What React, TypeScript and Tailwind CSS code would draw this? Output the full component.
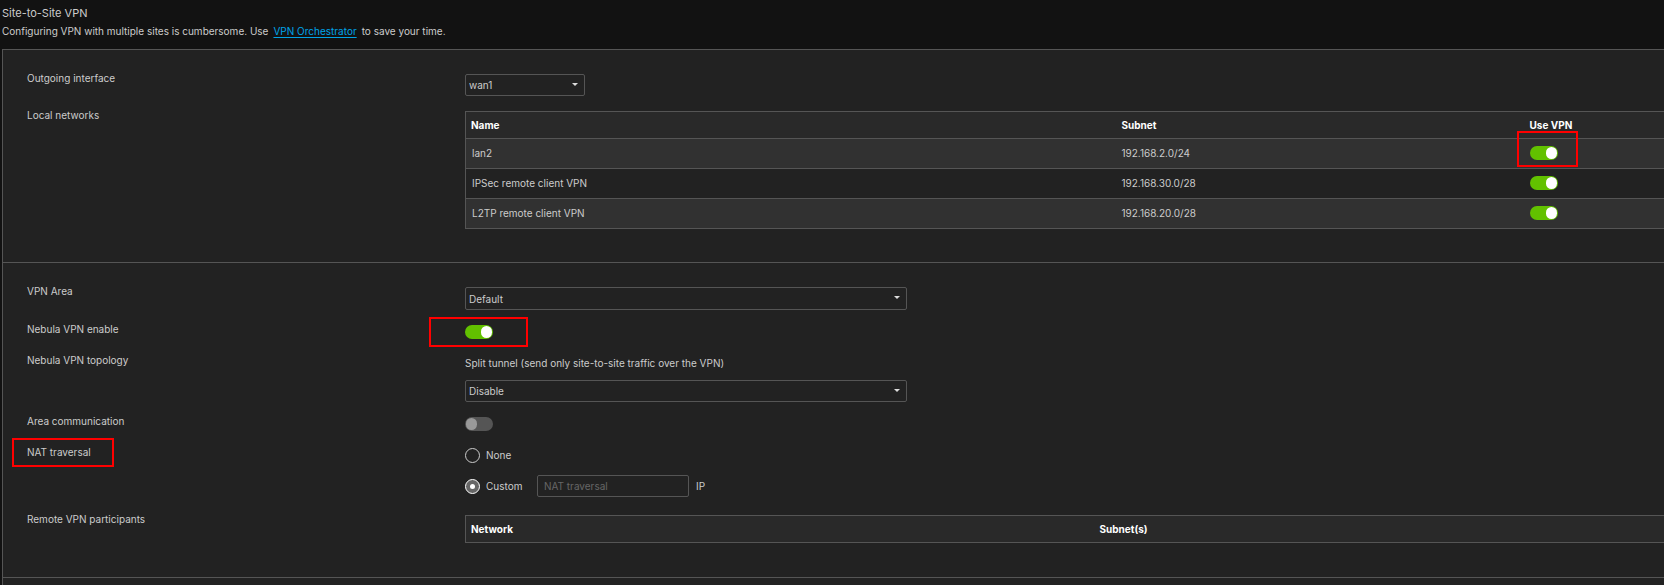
import { useState, type ReactNode } from "react";

interface Network {
  name: string;
  subnet: string;
  useVpn: boolean;
  highlighted?: boolean;
}

const initialNetworks: Network[] = [
  { name: "lan2", subnet: "192.168.2.0/24", useVpn: true, highlighted: true },
  { name: "IPSec remote client VPN", subnet: "192.168.30.0/28", useVpn: true },
  { name: "L2TP remote client VPN", subnet: "192.168.20.0/28", useVpn: true },
];

function Toggle({ id, label, checked, onChange }: {
  id?: string;
  label?: string;
  checked: boolean;
  onChange: (value: boolean) => void;
}) {
  return (
    <input
      type="checkbox"
      role="switch"
      id={id}
      aria-label={label}
      checked={checked}
      onChange={(e) => onChange(e.target.checked)}
      className="block w-7 h-3.5 shrink-0 appearance-none rounded-full bg-[#555] p-px cursor-pointer before:block before:h-3 before:w-[11px] before:rounded-full before:bg-[#999] checked:bg-[#62c100] checked:before:ml-auto checked:before:bg-white"
    />
  );
}

function Select({ id, options, className }: { id: string; options: string[]; className: string }) {
  return (
    <div className={`relative ${className}`}>
      <select
        id={id}
        className="block w-full h-full appearance-none rounded-xs border border-[#555] bg-[#222] pl-[3px] pr-5 text-[#ccc] outline-none"
      >
        {options.map((o) => (
          <option key={o}>{o}</option>
        ))}
      </select>
      <svg viewBox="0 0 6 3" className="pointer-events-none absolute right-[7px] top-[9px] w-1.5 h-[3px] fill-[#ddd]">
        <path d="M0 0h6L3 3z" />
      </svg>
    </div>
  );
}

function Radio({ id, label, checked, onChange }: {
  id: string;
  label: string;
  checked: boolean;
  onChange: () => void;
}) {
  return (
    <div className="flex items-center gap-1.5">
      <input
        type="radio"
        name="nat"
        id={id}
        checked={checked}
        onChange={onChange}
        className="grid place-items-center w-[15px] h-[15px] appearance-none rounded-full border border-[#ccc] checked:border-white checked:bg-[#666] checked:before:block checked:before:w-[5px] checked:before:h-[5px] checked:before:rounded-full checked:before:bg-white"
      />
      <label htmlFor={id} className="pb-px leading-[14px]">{label}</label>
    </div>
  );
}

// Red callout frame drawn over the form
function Callout({ className }: { className: string }) {
  return <span className={`pointer-events-none absolute z-10 border-2 border-[#f00] ${className}`} />;
}

function Row({ label, htmlFor, callout, children }: {
  label: string;
  htmlFor?: string;
  callout?: ReactNode;
  children: ReactNode;
}) {
  return (
    <div className="flex items-start">
      <div className="relative w-[438px] shrink-0">
        {htmlFor ? <label htmlFor={htmlFor} className="block">{label}</label> : <div>{label}</div>}
        {callout}
      </div>
      <div className="flex-1 min-w-0 pt-1">{children}</div>
    </div>
  );
}

export default function App() {
  const [networks, setNetworks] = useState(initialNetworks);
  const [vpnEnabled, setVpnEnabled] = useState(true);
  const [areaComm, setAreaComm] = useState(false);
  const [nat, setNat] = useState("custom");

  const setUseVpn = (name: string, useVpn: boolean) =>
    setNetworks(networks.map((n) => (n.name === name ? { ...n, useVpn } : n)));

  return (
    <div className="min-h-screen overflow-hidden flex flex-col bg-[#121212] pl-0.5 font-['Inter',sans-serif] text-[10px] leading-4 text-[#ccc]">
      {/* Header */}
      <header className="pt-[5px] pb-2.5">
        <h1 className="text-[11px] leading-4">Site-to-Site VPN</h1>
        <p className="pt-0.5">
          Configuring VPN with multiple sites is cumbersome. Use
          <a href="#orchestrator" className="mx-[5px] text-[#00a3e8] underline underline-offset-2">VPN Orchestrator</a>
          to save your time.
        </p>
      </header>

      <main className="flex-1 border-t border-l border-[#555] bg-[#222]">
        {/* Interfaces */}
        <section className="flex flex-col gap-[11px] border-b border-[#555] pl-6 pt-5 pb-[33px]">
          <Row label="Outgoing interface" htmlFor="outgoing">
            <Select id="outgoing" options={["wan1", "wan2"]} className="w-[120px] h-[22px]" />
          </Row>
          <Row label="Local networks">
            <table className="w-full border-collapse border border-r-0 border-[#555] text-left">
              <thead className="bg-[#292929] font-bold text-white">
                <tr className="h-[27px]">
                  <th className="w-[651px] pl-[5px]">Name</th>
                  <th className="w-[408px] pl-[5px]">Subnet</th>
                  <th className="pl-[5px]">Use VPN</th>
                </tr>
              </thead>
              <tbody>
                {networks.map((n) => (
                  <tr key={n.name} className="h-[30px] border-t border-[#555] odd:bg-[#313131]">
                    <td className="pl-1.5 pb-0.5">{n.name}</td>
                    <td className="pl-[5px] pb-0.5">{n.subnet}</td>
                    <td className="pl-[5px] pb-0.5">
                      <div className="relative w-7">
                        <Toggle
                          label={`Use VPN for ${n.name}`}
                          checked={n.useVpn}
                          onChange={(v) => setUseVpn(n.name, v)}
                        />
                        {n.highlighted && <Callout className="-left-[13px] -top-[15px] w-[61px] h-9" />}
                      </div>
                    </td>
                  </tr>
                ))}
              </tbody>
            </table>
          </Row>
        </section>

        {/* VPN settings */}
        <section className="flex flex-col gap-[11px] border-b border-[#555] pl-6 pt-5 pb-[34px]">
          <Row label="VPN Area" htmlFor="area">
            <Select id="area" options={["Default"]} className="w-[442px] max-w-full h-[23px]" />
          </Row>
          <Row label="Nebula VPN enable" htmlFor="enable">
            <div className="relative h-4 w-7">
              <Toggle id="enable" checked={vpnEnabled} onChange={setVpnEnabled} />
              <Callout className="-left-9 -top-2 w-[99px] h-[30px]" />
            </div>
          </Row>
          <Row label="Nebula VPN topology" htmlFor="topology">
            <p className="leading-[14px]">Split tunnel (send only site-to-site traffic over the VPN)</p>
            <Select
              id="topology"
              options={["Disable", "Site-to-Site", "Hub-and-Spoke"]}
              className="mt-2.5 w-[442px] max-w-full h-[22px]"
            />
          </Row>
          <Row label="Area communication" htmlFor="comm">
            <div className="h-4">
              <Toggle id="comm" checked={areaComm} onChange={setAreaComm} />
            </div>
          </Row>
          <Row label="NAT traversal" callout={<Callout className="-left-[15px] -top-1.5 w-[102px] h-[29px]" />}>
            <div className="flex flex-col gap-3">
              <Radio id="nat-none" label="None" checked={nat === "none"} onChange={() => setNat("none")} />
              <div className="flex items-center">
                <div className="w-[72px]">
                  <Radio id="nat-custom" label="Custom" checked={nat === "custom"} onChange={() => setNat("custom")} />
                </div>
                <input
                  id="nat-ip"
                  type="text"
                  placeholder="NAT traversal"
                  className="w-[152px] h-[22px] rounded-xs border border-[#555] bg-transparent px-1.5 outline-none placeholder:text-[#666]"
                />
                <label htmlFor="nat-ip" className="pl-[7px]">IP</label>
              </div>
            </div>
          </Row>
          <div className="pt-[3px]">
            <Row label="Remote VPN participants">
              <table className="w-full border-collapse border border-r-0 border-[#555] text-left">
                <thead className="bg-[#292929] font-bold text-white">
                  <tr className="h-[27px]">
                    <th className="w-[629px] pl-[5px]">Network</th>
                    <th className="pl-[5px]">Subnet(s)</th>
                  </tr>
                </thead>
              </table>
            </Row>
          </div>
        </section>
      </main>
    </div>
  );
}
